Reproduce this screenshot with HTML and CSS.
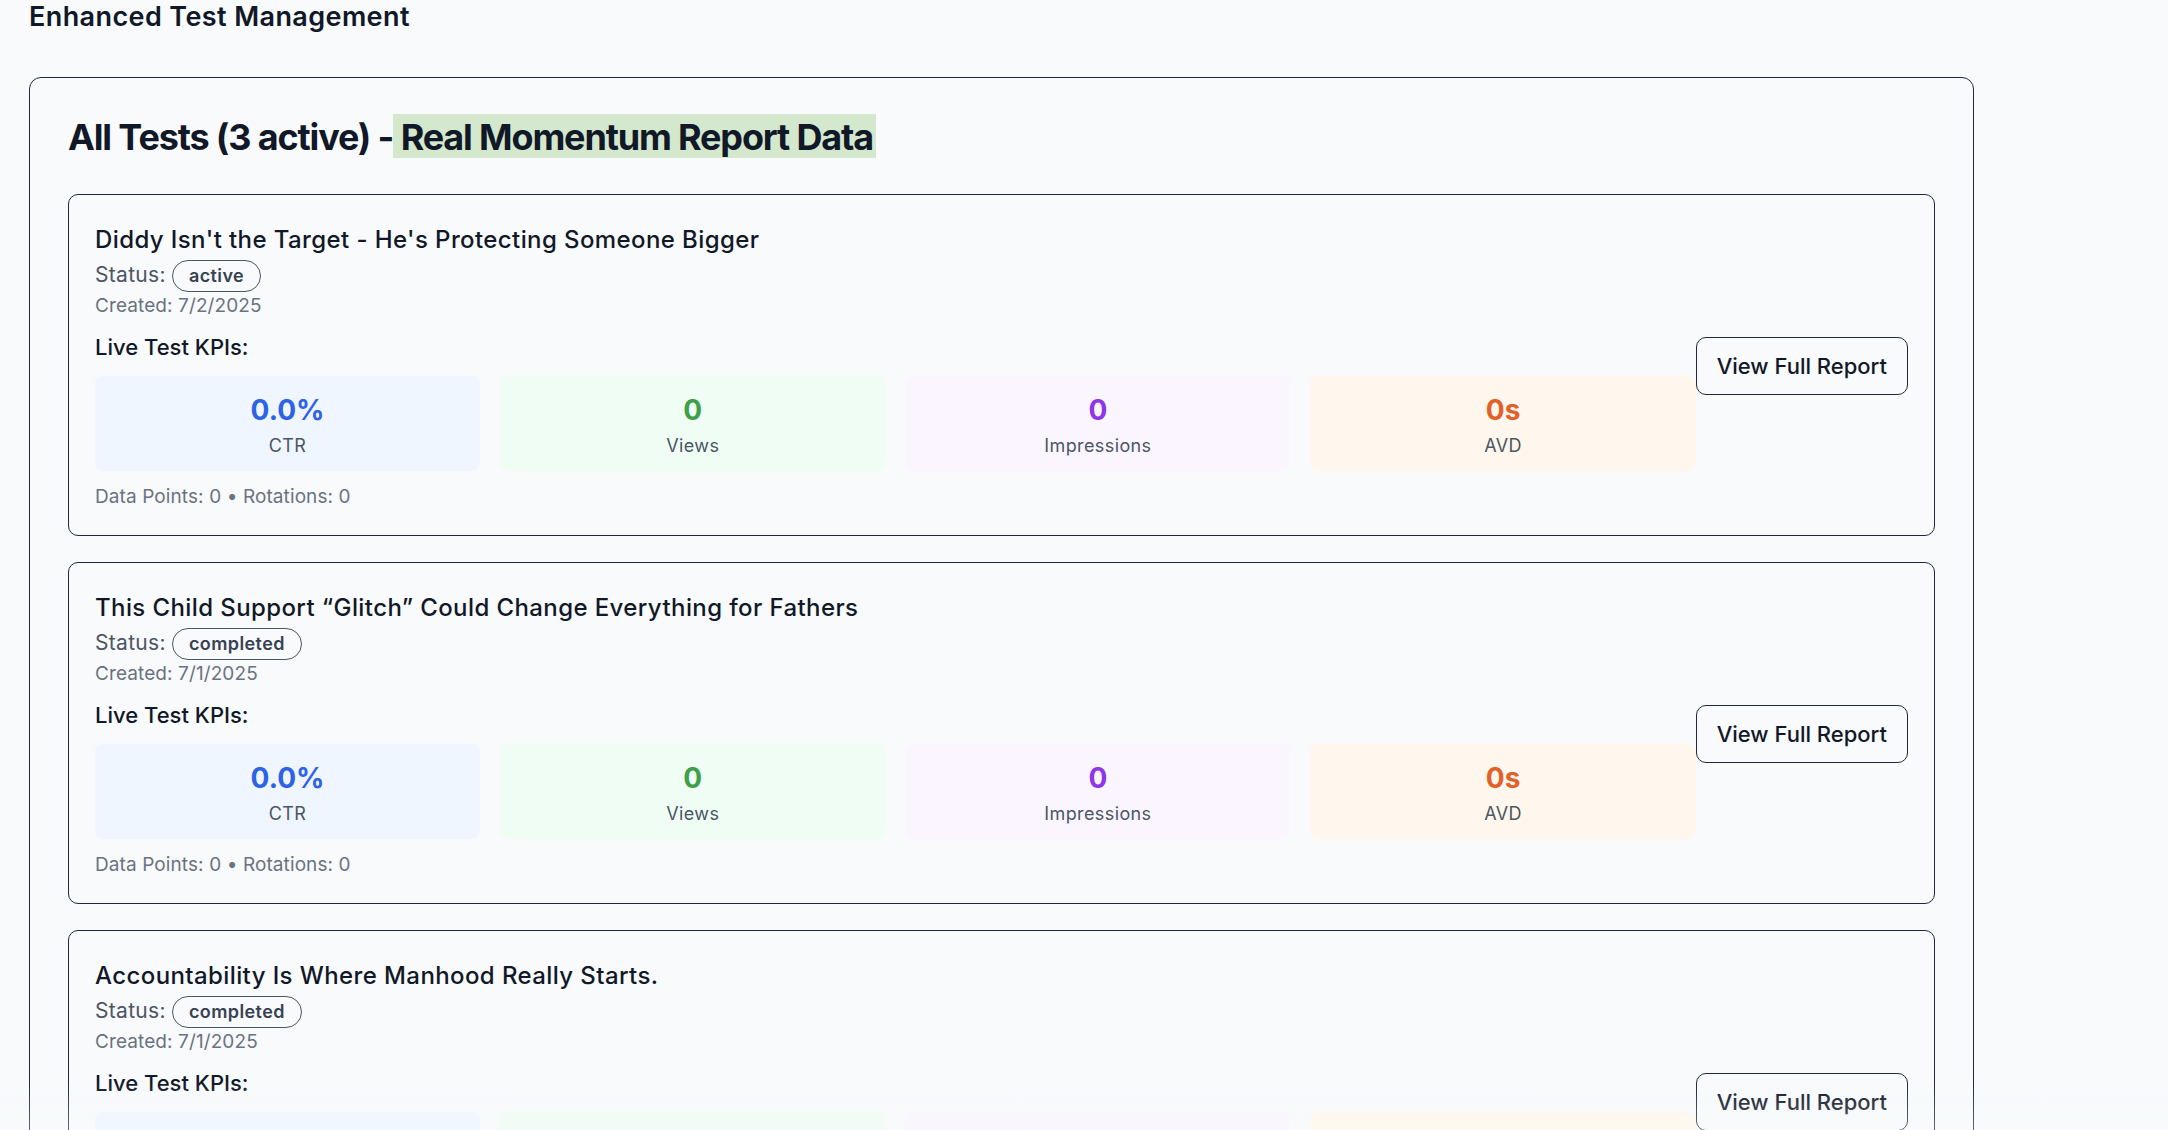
FILE: index.html
```html
<!DOCTYPE html>
<html lang="en">
<head>
<meta charset="utf-8">
<title>Enhanced Test Management</title>
<link rel="stylesheet" href="styles.css">
</head>
<body>
<div class="page">
  <h1 class="page-title">Enhanced Test Management</h1>
  <section class="panel">
    <h2 class="panel-title">All Tests (3 active) -<span class="hl">&nbsp;Real Momentum Report Data</span></h2>
    <div class="list">
      <article class="card">
        <div class="card-main">
          <h3 class="test-title">Diddy Isn't the Target - He's Protecting Someone Bigger</h3>
          <div class="status">Status: <span class="badge">active</span></div>
          <div class="created">Created: 7/2/2025</div>
          <div class="kpi-label">Live Test KPIs:</div>
          <div class="kpis">
            <div class="kpi kpi-blue"><div class="kpi-value">0.0%</div><div class="kpi-name">CTR</div></div>
            <div class="kpi kpi-green"><div class="kpi-value">0</div><div class="kpi-name">Views</div></div>
            <div class="kpi kpi-purple"><div class="kpi-value">0</div><div class="kpi-name">Impressions</div></div>
            <div class="kpi kpi-orange"><div class="kpi-value">0s</div><div class="kpi-name">AVD</div></div>
          </div>
          <div class="meta">Data Points: 0 • Rotations: 0</div>
        </div>
        <button class="btn">View Full Report</button>
      </article>
      <article class="card">
        <div class="card-main">
          <h3 class="test-title">This Child Support “Glitch” Could Change Everything for Fathers</h3>
          <div class="status">Status: <span class="badge">completed</span></div>
          <div class="created">Created: 7/1/2025</div>
          <div class="kpi-label">Live Test KPIs:</div>
          <div class="kpis">
            <div class="kpi kpi-blue"><div class="kpi-value">0.0%</div><div class="kpi-name">CTR</div></div>
            <div class="kpi kpi-green"><div class="kpi-value">0</div><div class="kpi-name">Views</div></div>
            <div class="kpi kpi-purple"><div class="kpi-value">0</div><div class="kpi-name">Impressions</div></div>
            <div class="kpi kpi-orange"><div class="kpi-value">0s</div><div class="kpi-name">AVD</div></div>
          </div>
          <div class="meta">Data Points: 0 • Rotations: 0</div>
        </div>
        <button class="btn">View Full Report</button>
      </article>
      <article class="card">
        <div class="card-main">
          <h3 class="test-title">Accountability Is Where Manhood Really Starts.</h3>
          <div class="status">Status: <span class="badge">completed</span></div>
          <div class="created">Created: 7/1/2025</div>
          <div class="kpi-label">Live Test KPIs:</div>
          <div class="kpis">
            <div class="kpi kpi-blue"><div class="kpi-value">0.0%</div><div class="kpi-name">CTR</div></div>
            <div class="kpi kpi-green"><div class="kpi-value">0</div><div class="kpi-name">Views</div></div>
            <div class="kpi kpi-purple"><div class="kpi-value">0</div><div class="kpi-name">Impressions</div></div>
            <div class="kpi kpi-orange"><div class="kpi-value">0s</div><div class="kpi-name">AVD</div></div>
          </div>
          <div class="meta">Data Points: 0 • Rotations: 0</div>
        </div>
        <button class="btn">View Full Report</button>
      </article>
    </div>
  </section>
</div>
<div class="bottom-fade"></div>
</body>
</html>
```
FILE: styles.css
```css
* { box-sizing: border-box; }
html, body {
  margin: 0;
  padding: 0;
  background: #f8fafc;
}
body {
  font-family: Inter, "Noto Sans", "Liberation Sans", sans-serif;
  color: #111827;
  overflow: hidden;
}
.page {
  padding: 1px 29px 0 29px;
}
.page-title {
  margin: 0 0 44px 0;
  font-size: 27px;
  line-height: 32px;
  font-weight: 600;
  letter-spacing: 0.4px;
  color: #111827;
}
.panel {
  width: 1945px;
  border: 1px solid #1e293b;
  border-radius: 12px;
  padding: 36px 38px 40px 38px;
}
.panel-title {
  margin: 0 0 35px 0;
  font-size: 36px;
  line-height: 44px;
  font-weight: 700;
  color: #111827;
  letter-spacing: -1.15px;
}
.hl {
  display: inline-block;
  background: #d3e8cc;
  line-height: 42px;
  padding: 2px 3px 0 0;
  height: 44px;
}
.list {
  display: flex;
  flex-direction: column;
  gap: 26.5px;
}
.card {
  display: flex;
  align-items: center;
  border: 1px solid #1e293b;
  border-radius: 10px;
  padding: 29px 26px 26px 26px;
}
.card-main {
  flex: 1;
  min-width: 0;
}
.test-title {
  margin: 0;
  font-size: 24px;
  line-height: 32px;
  font-weight: 500;
  letter-spacing: 0.4px;
  color: #111827;
}
.status {
  margin-top: 4px;
  font-size: 21px;
  line-height: 28px;
  letter-spacing: 0.3px;
  color: #4b5563;
}
.badge {
  display: inline-block;
  border: 1px solid #4b5563;
  border-radius: 999px;
  padding: 2px 16px;
  font-size: 18px;
  line-height: 26px;
  font-weight: 600;
  letter-spacing: 0.4px;
  color: #374151;
}
.created {
  margin-top: 2px;
  font-size: 19px;
  line-height: 24px;
  letter-spacing: 0.1px;
  color: #6b7280;
}
.kpi-label {
  margin-top: 14.5px;
  font-size: 22px;
  line-height: 28px;
  font-weight: 500;
  color: #111827;
}
.kpis {
  margin-top: 15px;
  display: grid;
  grid-template-columns: repeat(4, 1fr);
  gap: 20px;
}
.kpi {
  border-radius: 8px;
  padding: 16px 8px 13.5px;
  text-align: center;
}
.kpi-value {
  font-size: 28px;
  line-height: 36px;
  font-weight: 700;
}
.kpi-name {
  margin-top: 6px;
  font-size: 18px;
  line-height: 24px;
  letter-spacing: 0.4px;
  color: #4b5563;
}
.kpi-blue { background: #eff6ff; }
.kpi-blue .kpi-value { color: #2f63e6; }
.kpi-green { background: #f0fdf4; }
.kpi-green .kpi-value { color: #3f9f4a; }
.kpi-purple { background: #faf5ff; }
.kpi-purple .kpi-value { color: #8e36e8; }
.kpi-orange { background: #fff7ed; }
.kpi-orange .kpi-value { color: #e2612a; }
.meta {
  margin-top: 13.5px;
  font-size: 19px;
  line-height: 24px;
  letter-spacing: 0.1px;
  color: #6b7280;
}
.btn {
  flex: none;
  font-family: inherit;
  font-size: 22px;
  line-height: 28px;
  font-weight: 500;
  color: #111827;
  background: #f8fafc;
  border: 1px solid #1e293b;
  border-radius: 10px;
  padding: 14px 20px;
  height: 58px;
}
.bottom-fade {
  position: fixed;
  left: 0;
  right: 0;
  bottom: 0;
  height: 50px;
  background: linear-gradient(to bottom, rgba(248, 250, 252, 0), rgba(248, 250, 252, 0.3));
  pointer-events: none;
}
```
